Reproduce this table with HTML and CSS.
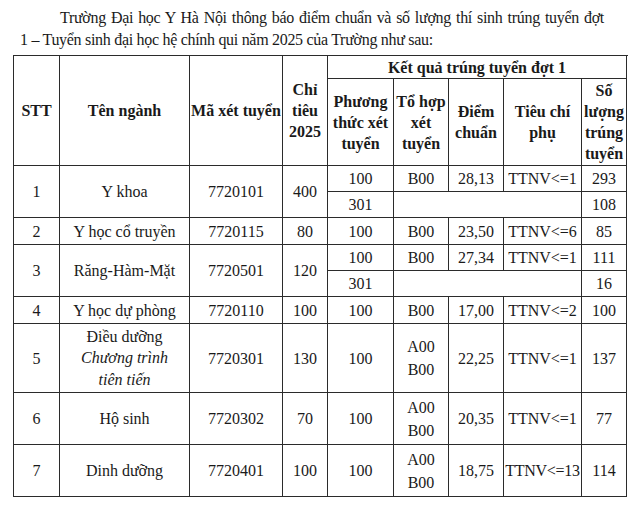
FILE: index.html
```html
<!DOCTYPE html>
<html lang="vi">
<head>
<meta charset="utf-8">
<link rel="stylesheet" href="styles.css">
</head>
<body>
<div class="page">
  <p class="intro">Trường Đại học Y Hà Nội thông báo điểm chuẩn và số lượng thí sinh trúng tuyển đợt <span class="nobr">1 – Tuyển</span> sinh đại học hệ chính qui năm 2025 của Trường như sau:</p>
  <table class="results">
    <colgroup>
      <col class="c-stt"><col class="c-name"><col class="c-code"><col class="c-quota">
      <col class="c-method"><col class="c-combo"><col class="c-score"><col class="c-crit"><col class="c-count">
    </colgroup>
    <thead>
      <tr class="h1">
        <th rowspan="2">STT</th>
        <th rowspan="2">Tên ngành</th>
        <th rowspan="2" class="nowrap">Mã xét tuyển</th>
        <th rowspan="2">Chỉ tiêu 2025</th>
        <th colspan="6">Kết quả trúng tuyển đợt 1</th>
      </tr>
      <tr class="h2">
        <th>Phương thức xét tuyển</th>
        <th>Tổ hợp xét tuyển</th>
        <th>Điểm chuẩn</th>
        <th>Tiêu chí phụ</th>
        <th>Số lượng trúng tuyển</th>
      </tr>
    </thead>
    <tbody>
      <tr class="r26">
        <td rowspan="2">1</td><td rowspan="2">Y khoa</td><td rowspan="2">7720101</td><td rowspan="2">400</td>
        <td>100</td><td>B00</td><td>28,13</td><td>TTNV&lt;=1</td><td>293</td>
      </tr>
      <tr class="r26">
        <td>301</td><td colspan="3"></td><td>108</td>
      </tr>
      <tr class="r27">
        <td>2</td><td>Y học cổ truyền</td><td>7720115</td><td>80</td>
        <td>100</td><td>B00</td><td>23,50</td><td>TTNV&lt;=6</td><td>85</td>
      </tr>
      <tr class="r26">
        <td rowspan="2">3</td><td rowspan="2">Răng-Hàm-Mặt</td><td rowspan="2">7720501</td><td rowspan="2">120</td>
        <td>100</td><td>B00</td><td>27,34</td><td>TTNV&lt;=1</td><td>111</td>
      </tr>
      <tr class="r26">
        <td>301</td><td colspan="3"></td><td>16</td>
      </tr>
      <tr class="r27">
        <td>4</td><td>Y học dự phòng</td><td>7720110</td><td>100</td>
        <td>100</td><td>B00</td><td>17,00</td><td>TTNV&lt;=2</td><td>100</td>
      </tr>
      <tr class="r69">
        <td>5</td><td class="multi">Điều dưỡng<br><em>Chương trình<br>tiên tiến</em></td><td>7720301</td><td>130</td>
        <td>100</td><td class="multi2">A00<br>B00</td><td>22,25</td><td>TTNV&lt;=1</td><td>137</td>
      </tr>
      <tr class="r52">
        <td>6</td><td>Hộ sinh</td><td>7720302</td><td>70</td>
        <td>100</td><td class="multi2">A00<br>B00</td><td>20,35</td><td>TTNV&lt;=1</td><td>77</td>
      </tr>
      <tr class="r52">
        <td>7</td><td>Dinh dưỡng</td><td>7720401</td><td>100</td>
        <td>100</td><td class="multi2">A00<br>B00</td><td>18,75</td><td class="tight">TTNV&lt;=13</td><td>114</td>
      </tr>
    </tbody>
  </table>
</div>
</body>
</html>
```

FILE: styles.css
```css
html, body {
  margin: 0;
  padding: 0;
  background: #ffffff;
}

body {
  font-family: "Liberation Serif", "Times New Roman", serif;
  color: #1a1a1a;
  width: 640px;
  height: 523px;
  overflow: hidden;
}

.page {
  padding: 7px 14px 0 13px;
}

.intro {
  margin: 0 0 4px 7px;
  width: 584px;
  font-size: 16px;
  letter-spacing: -0.3px;
  line-height: 22px;
  text-indent: 40px;
  text-align: justify;
}

.nobr {
  white-space: nowrap;
}

.results {
  border-collapse: collapse;
  table-layout: fixed;
  width: 614px;
  font-size: 16px;
  line-height: 21px;
}

.c-stt { width: 46px; }
.c-name { width: 130px; }
.c-code { width: 93px; }
.c-quota { width: 45px; }
.c-method { width: 66px; }
.c-combo { width: 55px; }
.c-score { width: 55px; }
.c-crit { width: 78px; }
.c-count { width: 45px; }

.results th,
.results td {
  border: 1.3px solid #2b2b2b;
  padding: 0;
  text-align: center;
  vertical-align: middle;
  overflow: visible;
  white-space: normal;
}

.results th {
  font-weight: bold;
}

.h1 { height: 23px; }
.h2 { height: 87px; }

.nowrap { white-space: nowrap !important; }

.r26 { height: 26px; }
.r27 { height: 27px; }
.r69 { height: 69px; }
.r52 { height: 52px; }

.multi { line-height: 21.5px; }
.multi2 { line-height: 23px; }

.tight {
  white-space: nowrap !important;
  letter-spacing: -0.3px;
}
```
